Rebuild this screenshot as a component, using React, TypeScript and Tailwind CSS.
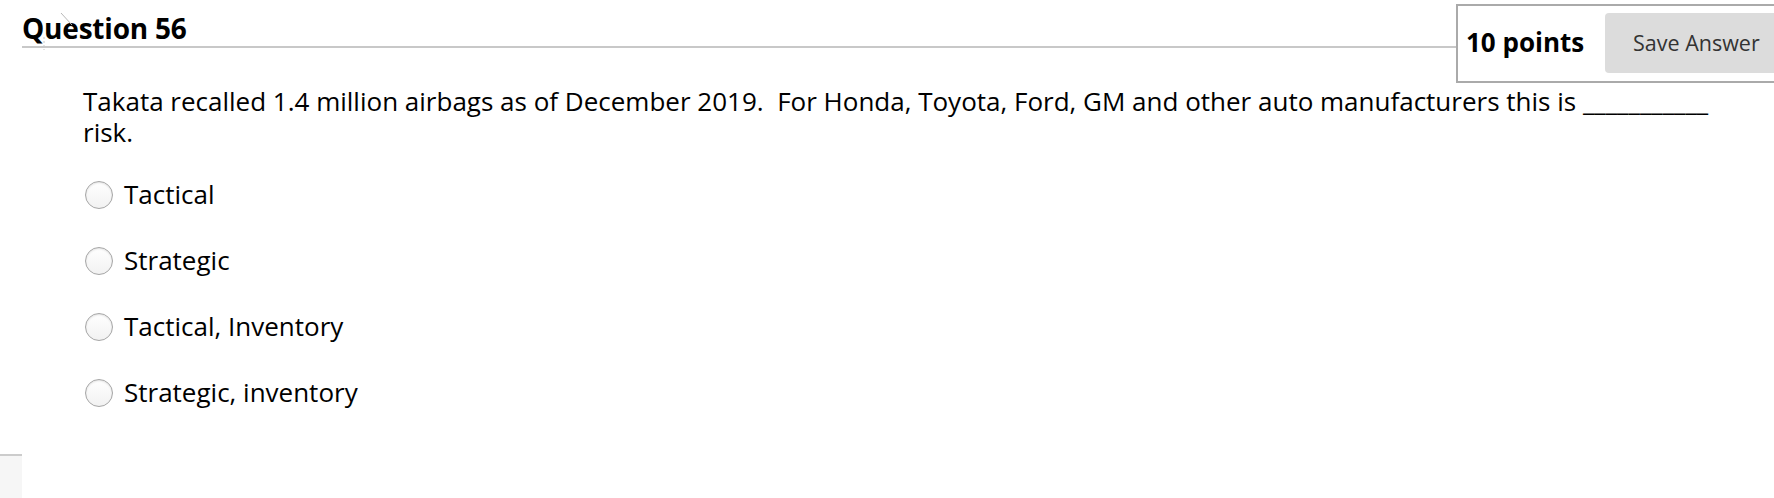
import React from "react";

const options = ["Tactical", "Strategic", "Tactical, Inventory", "Strategic, inventory"];

export default function App() {
  return (
    <div className="relative w-[1774px] h-[498px] overflow-hidden bg-white font-['Open_Sans',sans-serif] text-black">
      {/* header */}
      <div className="flex items-start">
        <div className="w-[1434px] shrink-0 ml-[22px] h-[48px] border-b-2 border-[#c8c8c8]">
          <h2 className="pt-[14px] text-[28px] leading-[28px] font-bold tracking-[-0.2px]">Question 56</h2>
        </div>
        <div className="mt-[4px] h-[79px] w-[340px] shrink-0 border-2 border-[#aaaaaa] flex items-start">
          <span className="mt-[23px] ml-[8px] w-[139px] shrink-0 text-[26px] leading-[26px] font-bold">10 points</span>
          <button className="mt-[7px] h-[60px] rounded-[4px] bg-[#dcdcdc] pl-[28px] pr-[24px] text-[21.5px] leading-[30px] text-[#333333] whitespace-nowrap">
            Save Answer
          </button>
        </div>
      </div>

      {/* question text */}
      <p className="mt-[3px] ml-[83px] text-[26px] leading-[31px]">
        Takata recalled 1.4 million airbags as of December 2019.{"\u00a0"} For Honda, Toyota, Ford, GM and other auto manufacturers this is ___________
        <br />
        risk.
      </p>

      {/* options */}
      <div className="mt-[31px] ml-[85px] flex flex-col gap-[35px]">
        {options.map((o) => (
          <label key={o} className="flex items-center gap-[11px] h-[31px]">
            <span className="w-[28px] h-[28px] rounded-full border border-[#a6a6a6] bg-linear-to-b from-white to-[#f2f2f2] shadow-[inset_0_1px_2px_rgba(0,0,0,0.12)] shrink-0" />
            <span className="text-[26px] leading-[31px]">{o}</span>
          </label>
        ))}
      </div>

      {/* bottom-left block */}
      <div className="mt-[46px] w-[22px] h-[44px] border-t-2 border-[#cccccc] bg-[#f6f6f6]" />

      {/* faint cursor artifact */}
      <svg className="absolute left-[40px] top-[10px]" width="40" height="42" viewBox="0 0 40 42">
        <line x1="21" y1="3" x2="32" y2="15" stroke="#b8b8b8" strokeWidth="1" />
        <line x1="4" y1="27" x2="4" y2="40" stroke="#c8c8c8" strokeWidth="1" strokeDasharray="2 2" />
      </svg>
    </div>
  );
}
